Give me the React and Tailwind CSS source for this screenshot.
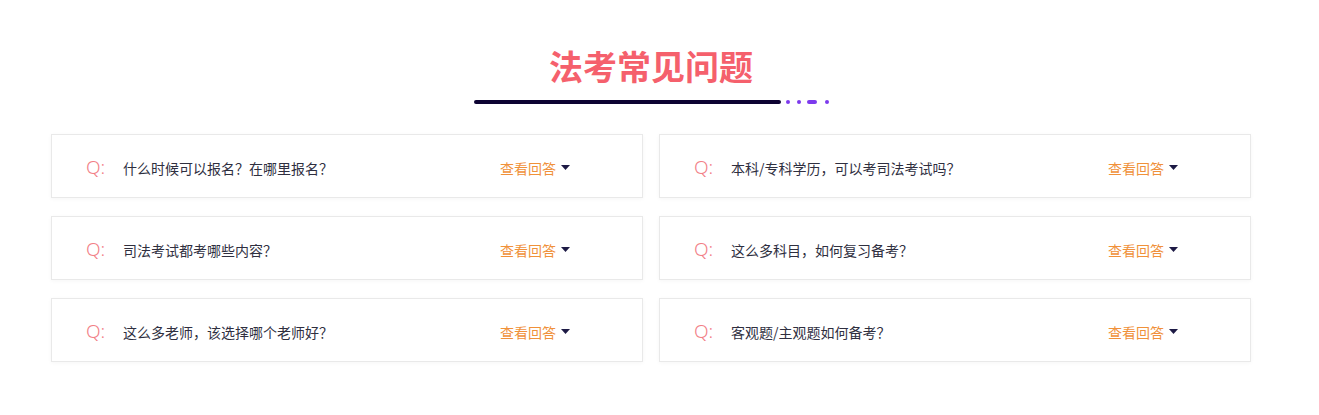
import React from "react";

const faqs = [
  "什么时候可以报名？在哪里报名？",
  "本科/专科学历，可以考司法考试吗？",
  "司法考试都考哪些内容？",
  "这么多科目，如何复习备考？",
  "这么多老师，该选择哪个老师好？",
  "客观题/主观题如何备考？",
];

const FaqCard = ({ text }) => (
  <div className="h-[64px] bg-white border border-[#e9e9e9] shadow-[0_1px_4px_rgba(0,0,0,0.04)] flex items-center pl-[34px] pr-[72px] pt-[3px]">
    <span className="text-[19px] font-light text-[#f27f88] leading-none w-[37px] font-['Noto_Sans',sans-serif]">
      Q:
    </span>
    <span className="flex-1 text-[14px] text-[#2f2f3f] leading-none">{text}</span>
    <button className="flex items-center gap-[5px] text-[14px] text-[#f0913a] leading-none">
      查看回答
      <svg width="9" height="5" viewBox="0 0 9 5">
        <path d="M0 0h9L4.5 5z" fill="#1d1a45" />
      </svg>
    </button>
  </div>
);

export default function App() {
  return (
    <div className="min-h-screen bg-white font-['Noto_Sans_CJK_SC','Noto_Sans',sans-serif]">
      <div className="w-[1200px] ml-[51px] pt-[44px] pb-[50px]">
        {/* Title */}
        <h2 className="text-center text-[34px] font-bold text-[#f5606c] leading-[44px]">
          法考常见问题
        </h2>
        <div className="flex items-center justify-center mt-[12px]">
          <div className="w-[307px] h-[4px] rounded-full bg-[#0d0332]" />
          <span className="ml-[5px] w-[4px] h-[4px] rounded-full bg-[#7c3aed]" />
          <span className="ml-[7px] w-[4px] h-[4px] rounded-full bg-[#7c3aed]" />
          <span className="ml-[6px] w-[10px] h-[4px] rounded-full bg-[#7c3aed]" />
          <span className="ml-[8px] w-[4px] h-[4px] rounded-full bg-[#7c3aed]" />
        </div>

        {/* FAQ grid */}
        <div className="grid grid-cols-2 gap-x-[16px] gap-y-[18px] mt-[30px]">
          {faqs.map(q => (
            <FaqCard key={q} text={q} />
          ))}
        </div>
      </div>
    </div>
  );
}
